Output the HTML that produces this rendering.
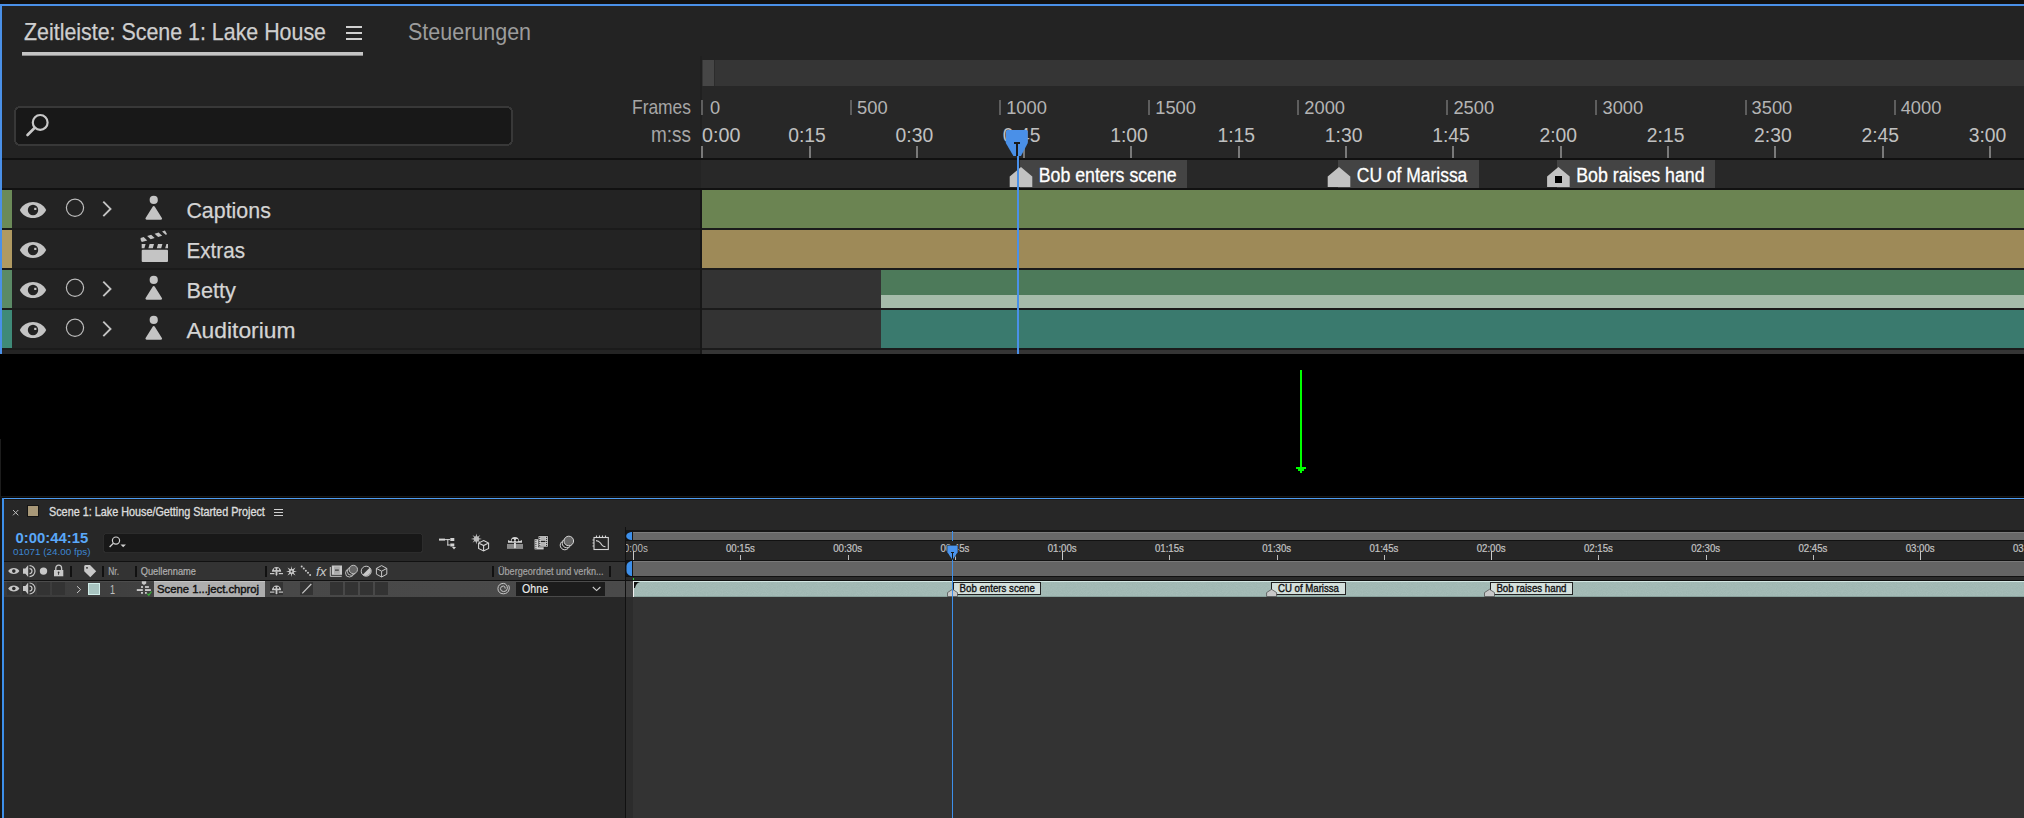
<!DOCTYPE html>
<html><head><meta charset="utf-8"><style>
html,body{margin:0;padding:0;background:#000;width:2024px;height:818px;overflow:hidden}
svg{display:block}
text{font-family:"Liberation Sans",sans-serif}
</style></head><body>
<svg width="2024" height="818" viewBox="0 0 2024 818" shape-rendering="crispEdges">
<rect x="0" y="0" width="2024" height="818" fill="#000" />
<rect x="0" y="0" width="2024" height="4" fill="#121110" />
<rect x="0" y="4" width="2024" height="2" fill="#4a90e8" />
<rect x="0" y="4" width="2" height="350" fill="#4a90e8" />
<rect x="2" y="6" width="2022" height="347" fill="#232323" />
<text x="24.00" y="40" font-size="23.19" font-weight="normal" fill="#cfcfcf" stroke="#cfcfcf" stroke-width="0.25" textLength="301.99" lengthAdjust="spacingAndGlyphs">Zeitleiste: Scene 1: Lake House</text>
<rect x="22" y="52" width="341" height="3" fill="#c4c4c4" />
<rect x="22" y="55" width="341" height="1" fill="#8a8a8a" />
<rect x="346" y="26" width="16" height="2" fill="#d0d0d0" />
<rect x="346" y="32" width="16" height="2" fill="#d0d0d0" />
<rect x="346" y="38" width="16" height="2" fill="#d0d0d0" />
<text x="408.00" y="40" font-size="23.19" font-weight="normal" fill="#9c9c9c" textLength="123.05" lengthAdjust="spacingAndGlyphs">Steuerungen</text>
<rect x="702" y="60" width="1322" height="26" fill="#353535" />
<rect x="703" y="60" width="11" height="26" fill="#464646" />
<rect x="714" y="60" width="1" height="26" fill="#2c2c2c" />
<rect x="15" y="107" width="497" height="38" rx="5" ry="5" fill="#181818" stroke="#383838" stroke-width="2"/>
<g shape-rendering="geometricPrecision"><circle cx="40.2" cy="122.4" r="7.4" fill="none" stroke="#c8c8c8" stroke-width="2.2"/><line x1="27.5" y1="135" x2="34.5" y2="128" stroke="#c8c8c8" stroke-width="2.6" stroke-linecap="round"/></g>
<rect x="701" y="86" width="1323" height="72" fill="#272727" />
<rect x="700" y="56" width="2" height="102" fill="#202020" />
<text x="632.00" y="114" font-size="20.29" font-weight="normal" fill="#a6a6a6" textLength="58.99" lengthAdjust="spacingAndGlyphs">Frames</text>
<text x="651.00" y="141.6" font-size="21.32" font-weight="normal" fill="#a6a6a6" textLength="40.02" lengthAdjust="spacingAndGlyphs">m:ss</text>
<rect x="701" y="100" width="2" height="15" fill="#5e5e5e" />
<text x="710.00" y="114" font-size="18.31" font-weight="normal" fill="#b4b4b4" textLength="10.18" lengthAdjust="spacingAndGlyphs">0</text>
<rect x="850" y="100" width="2" height="15" fill="#5e5e5e" />
<text x="857.08" y="114" font-size="18.31" font-weight="normal" fill="#b4b4b4" textLength="30.55" lengthAdjust="spacingAndGlyphs">500</text>
<rect x="999" y="100" width="2" height="15" fill="#5e5e5e" />
<text x="1006.16" y="114" font-size="18.31" font-weight="normal" fill="#b4b4b4" textLength="40.73" lengthAdjust="spacingAndGlyphs">1000</text>
<rect x="1148" y="100" width="2" height="15" fill="#5e5e5e" />
<text x="1155.24" y="114" font-size="18.31" font-weight="normal" fill="#b4b4b4" textLength="40.73" lengthAdjust="spacingAndGlyphs">1500</text>
<rect x="1297" y="100" width="2" height="15" fill="#5e5e5e" />
<text x="1304.32" y="114" font-size="18.31" font-weight="normal" fill="#b4b4b4" textLength="40.73" lengthAdjust="spacingAndGlyphs">2000</text>
<rect x="1446" y="100" width="2" height="15" fill="#5e5e5e" />
<text x="1453.40" y="114" font-size="18.31" font-weight="normal" fill="#b4b4b4" textLength="40.73" lengthAdjust="spacingAndGlyphs">2500</text>
<rect x="1595" y="100" width="2" height="15" fill="#5e5e5e" />
<text x="1602.48" y="114" font-size="18.31" font-weight="normal" fill="#b4b4b4" textLength="40.73" lengthAdjust="spacingAndGlyphs">3000</text>
<rect x="1745" y="100" width="2" height="15" fill="#5e5e5e" />
<text x="1751.56" y="114" font-size="18.31" font-weight="normal" fill="#b4b4b4" textLength="40.73" lengthAdjust="spacingAndGlyphs">3500</text>
<rect x="1894" y="100" width="2" height="15" fill="#5e5e5e" />
<text x="1900.64" y="114" font-size="18.31" font-weight="normal" fill="#b4b4b4" textLength="40.73" lengthAdjust="spacingAndGlyphs">4000</text>
<rect x="701" y="146" width="2" height="12" fill="#7a7a7a" />
<text x="702.00" y="142" font-size="19.72" font-weight="normal" fill="#c0c0c0" textLength="38.38" lengthAdjust="spacingAndGlyphs">0:00</text>
<rect x="809" y="146" width="2" height="12" fill="#7a7a7a" />
<text x="788.23" y="142" font-size="19.72" font-weight="normal" fill="#c0c0c0" textLength="37.61" lengthAdjust="spacingAndGlyphs">0:15</text>
<rect x="916" y="146" width="2" height="12" fill="#7a7a7a" />
<text x="895.55" y="142" font-size="19.72" font-weight="normal" fill="#c0c0c0" textLength="37.61" lengthAdjust="spacingAndGlyphs">0:30</text>
<rect x="1023" y="146" width="2" height="12" fill="#7a7a7a" />
<text x="1002.87" y="142" font-size="19.72" font-weight="normal" fill="#c0c0c0" textLength="37.61" lengthAdjust="spacingAndGlyphs">0:45</text>
<rect x="1130" y="146" width="2" height="12" fill="#7a7a7a" />
<text x="1110.19" y="142" font-size="19.72" font-weight="normal" fill="#c0c0c0" textLength="37.61" lengthAdjust="spacingAndGlyphs">1:00</text>
<rect x="1238" y="146" width="2" height="12" fill="#7a7a7a" />
<text x="1217.51" y="142" font-size="19.72" font-weight="normal" fill="#c0c0c0" textLength="37.61" lengthAdjust="spacingAndGlyphs">1:15</text>
<rect x="1345" y="146" width="2" height="12" fill="#7a7a7a" />
<text x="1324.83" y="142" font-size="19.72" font-weight="normal" fill="#c0c0c0" textLength="37.61" lengthAdjust="spacingAndGlyphs">1:30</text>
<rect x="1452" y="146" width="2" height="12" fill="#7a7a7a" />
<text x="1432.15" y="142" font-size="19.72" font-weight="normal" fill="#c0c0c0" textLength="37.61" lengthAdjust="spacingAndGlyphs">1:45</text>
<rect x="1560" y="146" width="2" height="12" fill="#7a7a7a" />
<text x="1539.47" y="142" font-size="19.72" font-weight="normal" fill="#c0c0c0" textLength="37.61" lengthAdjust="spacingAndGlyphs">2:00</text>
<rect x="1667" y="146" width="2" height="12" fill="#7a7a7a" />
<text x="1646.79" y="142" font-size="19.72" font-weight="normal" fill="#c0c0c0" textLength="37.61" lengthAdjust="spacingAndGlyphs">2:15</text>
<rect x="1774" y="146" width="2" height="12" fill="#7a7a7a" />
<text x="1754.11" y="142" font-size="19.72" font-weight="normal" fill="#c0c0c0" textLength="37.61" lengthAdjust="spacingAndGlyphs">2:30</text>
<rect x="1882" y="146" width="2" height="12" fill="#7a7a7a" />
<text x="1861.43" y="142" font-size="19.72" font-weight="normal" fill="#c0c0c0" textLength="37.61" lengthAdjust="spacingAndGlyphs">2:45</text>
<rect x="1989" y="146" width="2" height="12" fill="#7a7a7a" />
<text x="1968.75" y="142" font-size="19.72" font-weight="normal" fill="#c0c0c0" textLength="37.61" lengthAdjust="spacingAndGlyphs">3:00</text>
<rect x="2" y="158" width="2022" height="2" fill="#111111" />
<rect x="2" y="160" width="699" height="28" fill="#242424" />
<rect x="701" y="160" width="1323" height="28" fill="#282828" />
<rect x="1019.5" y="160" width="167.5" height="28" fill="#444444" />
<polygon shape-rendering="geometricPrecision" points="1009.7,187 1009.7,176.5 1021,167 1032.3,176.5 1032.3,187" fill="#c2c2c2"/>
<text x="1038.80" y="181.7" font-size="19.57" font-weight="normal" fill="#ffffff" stroke="#ffffff" stroke-width="0.3" textLength="137.86" lengthAdjust="spacingAndGlyphs">Bob enters scene</text>
<rect x="1337.5" y="160" width="141.5" height="28" fill="#444444" />
<polygon shape-rendering="geometricPrecision" points="1327.7,187 1327.7,176.5 1339,167 1350.3,176.5 1350.3,187" fill="#c2c2c2"/>
<text x="1356.80" y="181.7" font-size="19.57" font-weight="normal" fill="#ffffff" stroke="#ffffff" stroke-width="0.3" textLength="110.51" lengthAdjust="spacingAndGlyphs">CU of Marissa</text>
<rect x="1556.9" y="160" width="158.0999999999999" height="28" fill="#444444" />
<polygon shape-rendering="geometricPrecision" points="1547.1000000000001,187 1547.1000000000001,176.5 1558.4,167 1569.7,176.5 1569.7,187" fill="#c2c2c2"/>
<rect x="1555.0" y="176" width="7" height="7" fill="#000" />
<text x="1576.20" y="181.7" font-size="19.57" font-weight="normal" fill="#ffffff" stroke="#ffffff" stroke-width="0.3" textLength="128.44" lengthAdjust="spacingAndGlyphs">Bob raises hand</text>
<rect x="2" y="188" width="2022" height="2" fill="#111111" />
<rect x="2" y="190" width="698" height="38" fill="#232323" />
<rect x="2" y="190" width="10" height="38" fill="#6b8a58" />
<rect x="702" y="190" width="1322" height="38" fill="#262626" />
<rect x="2" y="228" width="2022" height="2" fill="#1b1b1b" />
<text x="186.40" y="218" font-size="22.61" font-weight="normal" fill="#d4d4d4" stroke="#d4d4d4" stroke-width="0.25" textLength="84.44" lengthAdjust="spacingAndGlyphs">Captions</text>
<rect x="2" y="230" width="698" height="38" fill="#232323" />
<rect x="2" y="230" width="10" height="38" fill="#b09a62" />
<rect x="702" y="230" width="1322" height="38" fill="#262626" />
<rect x="2" y="268" width="2022" height="2" fill="#1b1b1b" />
<text x="186.40" y="258" font-size="22.61" font-weight="normal" fill="#d4d4d4" stroke="#d4d4d4" stroke-width="0.25" textLength="58.58" lengthAdjust="spacingAndGlyphs">Extras</text>
<rect x="2" y="270" width="698" height="38" fill="#232323" />
<rect x="2" y="270" width="10" height="38" fill="#5b8a66" />
<rect x="702" y="270" width="1322" height="38" fill="#262626" />
<rect x="2" y="308" width="2022" height="2" fill="#1b1b1b" />
<text x="186.40" y="298" font-size="22.61" font-weight="normal" fill="#d4d4d4" stroke="#d4d4d4" stroke-width="0.25" textLength="49.57" lengthAdjust="spacingAndGlyphs">Betty</text>
<rect x="2" y="310" width="698" height="38" fill="#232323" />
<rect x="2" y="310" width="10" height="38" fill="#3f8a78" />
<rect x="702" y="310" width="1322" height="38" fill="#262626" />
<rect x="2" y="348" width="2022" height="2" fill="#1b1b1b" />
<text x="186.40" y="338" font-size="22.61" font-weight="normal" fill="#d4d4d4" stroke="#d4d4d4" stroke-width="0.25" textLength="109.10" lengthAdjust="spacingAndGlyphs">Auditorium</text>
<rect x="700" y="190" width="2" height="164" fill="#171717" />
<rect x="702" y="190" width="1322" height="38" fill="#6b8452" />
<rect x="702" y="230" width="1322" height="38" fill="#9e8a58" />
<rect x="702" y="270" width="179" height="38" fill="#333333" />
<rect x="881" y="270" width="1143" height="25" fill="#4d7a5a" />
<rect x="881" y="295" width="1143" height="13" fill="#a5bcaa" />
<rect x="702" y="310" width="179" height="38" fill="#333333" />
<rect x="881" y="310" width="1143" height="38" fill="#3a7a6e" />
<rect x="2" y="350" width="698" height="4" fill="#242424" />
<rect x="702" y="350" width="1322" height="4" fill="#353535" />
<g shape-rendering="geometricPrecision" transform="translate(33,210) scale(1.0)"><path d="M-13.2,0 C-8,-10.8 8,-10.8 13.2,0 C8,10.8 -8,10.8 -13.2,0 Z" fill="#c4c4c4"/><circle cx="0" cy="0" r="5.2" fill="#232323"/><rect x="1.2" y="-2.2" width="2.2" height="2.2" fill="#c4c4c4"/></g>
<circle shape-rendering="geometricPrecision" cx="75" cy="207.8" r="8.6" fill="none" stroke="#bdbdbd" stroke-width="1.2"/>
<polyline shape-rendering="geometricPrecision" points="103.3,201.6 110.5,208.9 103.3,216.2" fill="none" stroke="#c4c4c4" stroke-width="1.9"/>
<g shape-rendering="geometricPrecision" fill="#c4c4c4"><circle cx="153.75" cy="199.9" r="4.1"/><path d="M153.75,207.2 L160.95,218.6 L146.55,218.6 Z" stroke="#c4c4c4" stroke-width="2.2" stroke-linejoin="round"/></g>
<g shape-rendering="geometricPrecision" transform="translate(33,250) scale(1.0)"><path d="M-13.2,0 C-8,-10.8 8,-10.8 13.2,0 C8,10.8 -8,10.8 -13.2,0 Z" fill="#c4c4c4"/><circle cx="0" cy="0" r="5.2" fill="#232323"/><rect x="1.2" y="-2.2" width="2.2" height="2.2" fill="#c4c4c4"/></g>
<g shape-rendering="geometricPrecision" transform="translate(33,290) scale(1.0)"><path d="M-13.2,0 C-8,-10.8 8,-10.8 13.2,0 C8,10.8 -8,10.8 -13.2,0 Z" fill="#c4c4c4"/><circle cx="0" cy="0" r="5.2" fill="#232323"/><rect x="1.2" y="-2.2" width="2.2" height="2.2" fill="#c4c4c4"/></g>
<circle shape-rendering="geometricPrecision" cx="75" cy="287.8" r="8.6" fill="none" stroke="#bdbdbd" stroke-width="1.2"/>
<polyline shape-rendering="geometricPrecision" points="103.3,281.6 110.5,288.9 103.3,296.2" fill="none" stroke="#c4c4c4" stroke-width="1.9"/>
<g shape-rendering="geometricPrecision" fill="#c4c4c4"><circle cx="153.75" cy="279.9" r="4.1"/><path d="M153.75,287.2 L160.95,298.6 L146.55,298.6 Z" stroke="#c4c4c4" stroke-width="2.2" stroke-linejoin="round"/></g>
<g shape-rendering="geometricPrecision" transform="translate(33,330) scale(1.0)"><path d="M-13.2,0 C-8,-10.8 8,-10.8 13.2,0 C8,10.8 -8,10.8 -13.2,0 Z" fill="#c4c4c4"/><circle cx="0" cy="0" r="5.2" fill="#232323"/><rect x="1.2" y="-2.2" width="2.2" height="2.2" fill="#c4c4c4"/></g>
<circle shape-rendering="geometricPrecision" cx="75" cy="327.8" r="8.6" fill="none" stroke="#bdbdbd" stroke-width="1.2"/>
<polyline shape-rendering="geometricPrecision" points="103.3,321.6 110.5,328.9 103.3,336.2" fill="none" stroke="#c4c4c4" stroke-width="1.9"/>
<g shape-rendering="geometricPrecision" fill="#c4c4c4"><circle cx="153.75" cy="319.9" r="4.1"/><path d="M153.75,327.2 L160.95,338.6 L146.55,338.6 Z" stroke="#c4c4c4" stroke-width="2.2" stroke-linejoin="round"/></g>
<g shape-rendering="geometricPrecision" fill="#c4c4c4"><rect x="141.7" y="249.8" width="26.3" height="12.2" rx="1"/><path d="M141.7,244 L145.6,244 L144.4,248.2 L141.7,248.2 Z M149.6,244 L154,244 L152.8,248.2 L148.4,248.2 Z M158,244 L162.4,244 L161.2,248.2 L156.8,248.2 Z M166.4,244 L168,244 L168,248.2 L165.2,248.2 Z"/><g transform="translate(141.3,242.2) rotate(-17)"><path d="M0.5,-4.2 L3.8,-4.2 L6.2,0 L0.5,0 Q-0.5,-2 0.5,-4.2 Z M7.4,-4.2 L11.6,-4.2 L14,0 L9.8,0 Z M15.2,-4.2 L19.4,-4.2 L21.8,0 L17.6,0 Z M23,-4.2 L26,-4.2 L27,0 L25.4,0 Z"/></g></g>
<rect x="1017" y="130" width="2" height="224" fill="#4a90e8" />
<path shape-rendering="geometricPrecision" d="M1005.8,131.5 Q1005.8,130 1007.3,130 L1026.3,130 Q1027.8,130 1027.8,131.5 L1027.8,143 L1021,156 L1013.4,156 L1005.8,143 Z" fill="#4a90e8"/>
<rect x="1014" y="142" width="6" height="2" fill="#1a1a1a" />
<rect x="1016" y="144" width="2" height="12" fill="#1a1a1a" />
<rect x="1300" y="370" width="2" height="97" fill="#00ff00" />
<rect x="1296" y="467" width="10" height="2" fill="#00ff00" />
<rect x="1298" y="469" width="6" height="2" fill="#00ff00" />
<rect x="1300" y="471" width="2" height="2" fill="#00ff00" />
<rect x="0" y="496" width="2024" height="1" fill="#171717" />
<rect x="0" y="497" width="2024" height="1" fill="#0a0806" />
<rect x="2" y="498" width="2022" height="1" fill="#4d9cf2" />
<rect x="2" y="499" width="2022" height="1" fill="#1c1814" />
<rect x="2" y="498" width="2" height="320" fill="#3d8fea" />
<rect x="0" y="497" width="2" height="321" fill="#151515" />
<rect x="0" y="439" width="1" height="58" fill="#1c1c1c" />
<rect x="4" y="500" width="2020" height="318" fill="#272727" />
<g shape-rendering="geometricPrecision"><line x1="13" y1="510" x2="18.3" y2="515.3" stroke="#bbb" stroke-width="1"/><line x1="18.3" y1="510" x2="13" y2="515.3" stroke="#bbb" stroke-width="1"/></g>
<rect x="27" y="505" width="12" height="12" fill="#151515" />
<rect x="28" y="506" width="10" height="10" fill="#a89878" />
<text x="49.00" y="516" font-size="11.88" font-weight="normal" fill="#dcdcdc" stroke="#dcdcdc" stroke-width="0.35" textLength="215.82" lengthAdjust="spacingAndGlyphs">Scene 1: Lake House/Getting Started Project</text>
<rect x="274" y="509" width="9" height="1" fill="#cfcfcf" />
<rect x="274" y="512" width="9" height="1" fill="#cfcfcf" />
<rect x="274" y="515" width="9" height="1" fill="#cfcfcf" />
<text x="15.60" y="542.8" font-size="14.37" font-weight="bold" fill="#5aa8f8" textLength="72.63" lengthAdjust="spacingAndGlyphs">0:00:44:15</text>
<text x="13.10" y="555.4" font-size="9.15" font-weight="normal" fill="#3d86d0" textLength="77.49" lengthAdjust="spacingAndGlyphs">01071 (24.00 fps)</text>
<rect x="103.5" y="533.5" width="319" height="19" rx="3" fill="#181818" stroke="#2c2c2c" stroke-width="1"/>
<g shape-rendering="geometricPrecision"><circle cx="116" cy="540.6" r="3.6" fill="none" stroke="#d0d0d0" stroke-width="1.2"/><line x1="109.6" y1="547" x2="113.4" y2="543.2" stroke="#d0d0d0" stroke-width="1.3"/><path d="M120.5,544.4 L125.9,544.4 L123.2,547.2 Z" fill="#d0d0d0"/></g>
<g shape-rendering="geometricPrecision" fill="#d4d4d4" stroke="none"><rect x="439" y="538.6" width="6" height="2"/><rect x="445" y="539.1" width="5" height="1"/><rect x="447.3" y="539" width="1" height="6.5"/><rect x="447.3" y="544.5" width="3" height="1"/><rect x="450.3" y="538" width="4" height="3"/><rect x="450.3" y="543.5" width="4" height="3"/><path d="M452,547 L456,547 L454,549.5 Z"/></g>
<g shape-rendering="geometricPrecision"><path d="M476.4,533.4 L477.3,537 L480.3,535 L478.3,538 L481.9,538.9 L478.3,539.8 L480.3,542.8 L477.3,540.8 L476.4,544.4 L475.5,540.8 L472.5,542.8 L474.5,539.8 L470.9,538.9 L474.5,538 L472.5,535 L475.5,537 Z" fill="#bdbdbd"/><circle cx="476.4" cy="538.9" r="2.6" fill="#bdbdbd"/><path d="M483.6,540.6 L488.6,543.1 L488.6,548.4 L483.6,550.9 L478.6,548.4 L478.6,543.1 Z M478.6,543.1 L483.6,545.6 L488.6,543.1 M483.6,545.6 L483.6,550.9" fill="#262626" stroke="#d4d4d4" stroke-width="1.1"/></g>
<g shape-rendering="geometricPrecision"><rect x="507" y="544" width="16" height="4.9" fill="#8a8a8a"/><path d="M510.9,541 A4,4 0 0 1 518.9,541 Z" fill="#d4d4d4"/><path d="M508,540 Q509,541 511,541 L519,541 Q521,541 522,540 L522,542.8 L508,542.8 Z" fill="#d4d4d4"/><circle cx="513" cy="540.2" r="1.2" fill="#111"/><circle cx="516.9" cy="540.2" r="1.2" fill="#111"/><path d="M514,542.8 L515.9,542.8 L515.9,547.6 L514.95,548.4 L514,547.6 Z" fill="#d8d8d8"/></g>
<g shape-rendering="geometricPrecision"><rect x="534" y="538.7" width="10.2" height="11.3" fill="#111"/><rect x="534.5" y="539.2" width="9.2" height="10.3" fill="#cfcfcf"/><circle cx="535.9" cy="540.6" r="0.55" fill="#222"/><circle cx="535.9" cy="542.5" r="0.55" fill="#222"/><circle cx="535.9" cy="544.4" r="0.55" fill="#222"/><circle cx="535.9" cy="546.3" r="0.55" fill="#222"/><circle cx="535.9" cy="548.2" r="0.55" fill="#222"/><rect x="538" y="535.6" width="10.4" height="11.6" fill="#111"/><rect x="538.5" y="536.1" width="9.4" height="10.6" fill="#cfcfcf"/><circle cx="539.8" cy="537.4" r="0.55" fill="#222"/><circle cx="546.6" cy="537.4" r="0.55" fill="#222"/><circle cx="539.8" cy="539.4" r="0.55" fill="#222"/><circle cx="546.6" cy="539.4" r="0.55" fill="#222"/><circle cx="539.8" cy="541.4" r="0.55" fill="#222"/><circle cx="546.6" cy="541.4" r="0.55" fill="#222"/><circle cx="539.8" cy="543.4" r="0.55" fill="#222"/><circle cx="546.6" cy="543.4" r="0.55" fill="#222"/><circle cx="539.8" cy="545.4" r="0.55" fill="#222"/><circle cx="546.6" cy="545.4" r="0.55" fill="#222"/><rect x="541" y="536.6" width="4.4" height="9.6" fill="#b4b4b4"/><rect x="541" y="540.9" width="4.4" height="1.1" fill="#222"/></g>
<g shape-rendering="geometricPrecision" fill="#262626" stroke="#d4d4d4" stroke-width="1"><circle cx="564.8" cy="545.2" r="4.6"/><circle cx="566.8" cy="543.2" r="4.6"/><circle cx="568.8" cy="541.0" r="4.8" fill="#666"/></g>
<g shape-rendering="geometricPrecision" fill="none" stroke="#d4d4d4" stroke-width="1.1"><rect x="594" y="537.5" width="14.3" height="12"/><path d="M596,540.6 Q598.5,540.6 600.5,543 Q602.5,546.8 605.5,546.8" /><path d="M596.5,537.5 L596.5,535.5 M599.5,537.5 L599.5,535.5 M602.5,537.5 L602.5,535.5 M605.5,537.5 L605.5,535.5 M594,540 L592.5,540 M594,543 L592.5,543 M594,546 L592.5,546"/></g>
<rect x="4" y="561" width="621" height="1" fill="#111111" />
<rect x="4" y="562" width="621" height="18" fill="#333333" />
<rect x="4" y="580" width="621" height="1" fill="#111111" />
<g shape-rendering="geometricPrecision" transform="translate(13.8,571.1)"><path d="M-5.6,0 C-3.5,-4 3.5,-4 5.6,0 C3.5,4 -3.5,4 -5.6,0 Z" fill="#c8c8c8"/><circle cx="0" cy="0" r="1.8" fill="#2a2a2a"/></g>
<g shape-rendering="geometricPrecision"><path d="M23,568.5 L25.4,568.5 L28.2,565.1 L28.2,577.1 L25.4,573.7 L23,573.7 Z" fill="#c8c8c8"/><path d="M29.5,568.6 A2.5,2.5 0 0 1 29.5,573.6 M29.5,565.6 A5.5,5.5 0 0 1 29.5,576.6" fill="none" stroke="#c8c8c8" stroke-width="1.2"/></g>
<circle shape-rendering="geometricPrecision" cx="43.5" cy="571.1" r="3.7" fill="#c8c8c8"/>
<g shape-rendering="geometricPrecision"><path d="M55.8,570 L55.8,568 A2.9,2.9 0 0 1 61.6,568 L61.6,570" fill="none" stroke="#c8c8c8" stroke-width="1.3"/><rect x="54" y="570" width="9.3" height="6.3" fill="#c8c8c8"/><circle cx="58.6" cy="572.5" r="0.9" fill="#333"/><rect x="58.2" y="572.5" width="0.8" height="2.4" fill="#333"/></g>
<rect x="70" y="566" width="2" height="11" fill="#111111" />
<g shape-rendering="geometricPrecision"><path d="M84.2,566.5 Q84,565 85.5,565 L90,565 L96.2,571.2 L90.3,577.3 L84.2,571.2 Z" fill="#c8c8c8"/><circle cx="87" cy="567.8" r="0.9" fill="#222"/></g>
<rect x="102" y="566" width="2" height="11" fill="#111111" />
<text x="108.30" y="575" font-size="10.43" font-weight="normal" fill="#aaaaaa" stroke="#aaaaaa" stroke-width="0.2" textLength="10.68" lengthAdjust="spacingAndGlyphs">Nr.</text>
<rect x="135" y="566" width="2" height="11" fill="#111111" />
<text x="140.70" y="575" font-size="10.43" font-weight="normal" fill="#b0b0b0" stroke="#b0b0b0" stroke-width="0.2" textLength="55.29" lengthAdjust="spacingAndGlyphs">Quellenname</text>
<rect x="265" y="566" width="2" height="11" fill="#111111" />
<g shape-rendering="geometricPrecision" transform="translate(270,565.5)"><path d="M1.9,6.2 A4.65,4.65 0 0 1 11.2,6.2 Z" fill="#c8c8c8"/><circle cx="4.8" cy="3.8" r="1" fill="#2c2c2c"/><circle cx="8.1" cy="3.8" r="1" fill="#2c2c2c"/><path d="M5.6,6 L7.4,6 L7.4,9.2 L6.5,10.4 L5.6,9.2 Z" fill="#c8c8c8"/><rect x="0" y="7.5" width="4.4" height="1.2" fill="#c8c8c8"/><rect x="8.8" y="7.5" width="4.2" height="1.2" fill="#c8c8c8"/></g>
<g shape-rendering="geometricPrecision"><path d="M291.5,566 L292.2,569.5 L295.5,567.5 L293.5,570.8 L297,571.5 L293.5,572.2 L295.5,575.5 L292.2,573.5 L291.5,577 L290.8,573.5 L287.5,575.5 L289.5,572.2 L286,571.5 L289.5,570.8 L287.5,567.5 L290.8,569.5 Z" fill="#c8c8c8"/><circle cx="291.5" cy="571.5" r="2.4" fill="#c8c8c8"/><circle cx="291.5" cy="571.5" r="0.9" fill="#333"/></g>
<g shape-rendering="geometricPrecision" fill="#c8c8c8"><circle cx="301.7" cy="566.5" r="1"/><circle cx="303.8" cy="568.6" r="1"/><circle cx="305.9" cy="570.7" r="1"/><circle cx="308" cy="572.8" r="1"/><circle cx="310.1" cy="574.9" r="1"/></g>
<text x="316" y="575.6" font-size="12" font-style="italic" fill="#c8c8c8" font-family="Liberation Serif" textLength="10.5" lengthAdjust="spacingAndGlyphs">fx</text>
<g shape-rendering="geometricPrecision"><path d="M330.3,567 L330.3,576.3 L341.7,576.3" fill="none" stroke="#c8c8c8" stroke-width="1"/><rect x="331.8" y="565.5" width="10.2" height="9.3" fill="#c8c8c8"/><rect x="334" y="566.5" width="5.8" height="7.3" fill="#aaa"/><rect x="335" y="569.6" width="3.8" height="1" fill="#222"/></g>
<g shape-rendering="geometricPrecision" fill="#333" stroke="#c8c8c8" stroke-width="0.9"><circle cx="349.5" cy="573" r="4"/><circle cx="351.3" cy="571.3" r="4"/><circle cx="353.3" cy="569.5" r="4.2" fill="#666"/></g>
<g shape-rendering="geometricPrecision"><circle cx="366.2" cy="571.2" r="5" fill="#333" stroke="#c8c8c8" stroke-width="1"/><path d="M369.7,567.7 A5,5 0 0 1 362.7,574.7 Z" fill="#c8c8c8"/></g>
<g shape-rendering="geometricPrecision" fill="none" stroke="#c8c8c8" stroke-width="1"><path d="M381.6,565.6 L386.8,568.4 L386.8,574.2 L381.6,577 L376.4,574.2 L376.4,568.4 Z M376.4,568.4 L381.6,571.2 L386.8,568.4 M381.6,571.2 L381.6,577"/></g>
<rect x="492" y="566" width="2" height="11" fill="#111111" />
<text x="498.00" y="575" font-size="10.43" font-weight="normal" fill="#a4a4a4" stroke="#a4a4a4" stroke-width="0.2" textLength="105.59" lengthAdjust="spacingAndGlyphs">Übergeordnet und verkn...</text>
<rect x="609" y="566" width="2" height="11" fill="#111111" />
<defs><linearGradient id="lg" x1="0" x2="1" y1="0" y2="0"><stop offset="0" stop-color="#3a3a3a"/><stop offset="0.45" stop-color="#484848"/><stop offset="1" stop-color="#4a4a4a"/></linearGradient></defs>
<rect x="4" y="581" width="621" height="16" fill="url(#lg)" />
<rect x="4" y="581" width="621" height="1" fill="#4c4c4c" />
<rect x="7.2" y="582.2" width="12.8" height="12.6" fill="#333333" />
<rect x="22" y="582.2" width="12.8" height="12.6" fill="#333333" />
<rect x="37" y="582.2" width="12.8" height="12.6" fill="#333333" />
<rect x="52" y="582.2" width="12.8" height="12.6" fill="#333333" />
<g shape-rendering="geometricPrecision" transform="translate(13.8,588.5)"><path d="M-5.6,0 C-3.5,-4 3.5,-4 5.6,0 C3.5,4 -3.5,4 -5.6,0 Z" fill="#c8c8c8"/><circle cx="0" cy="0" r="1.8" fill="#2a2a2a"/></g>
<g shape-rendering="geometricPrecision"><path d="M23,585.9 L25.4,585.9 L28.2,582.5 L28.2,594.5 L25.4,591.1 L23,591.1 Z" fill="#c8c8c8"/><path d="M29.5,586.0 A2.5,2.5 0 0 1 29.5,591.0 M29.5,583.0 A5.5,5.5 0 0 1 29.5,594.0" fill="none" stroke="#c8c8c8" stroke-width="1.2"/></g>
<polyline shape-rendering="geometricPrecision" points="77,586.2 80.6,589.6 77,593" fill="none" stroke="#c8c8c8" stroke-width="1"/>
<rect x="88" y="583" width="12.2" height="12.3" fill="#d0ece8" />
<rect x="89" y="584" width="10.2" height="10.3" fill="#a8c4c0" />
<text x="110.00" y="593.5" font-size="12.03" font-weight="normal" fill="#c0c0c0" textLength="5.01" lengthAdjust="spacingAndGlyphs">1</text>
<g shape-rendering="geometricPrecision" fill="#c8c8c8"><path d="M141.8,581.2 L146.2,581.2 L146.2,583.6 L144,585.1 L141.8,583.6 Z"/><rect x="141" y="586.1" width="2" height="1.8"/><rect x="145" y="586.1" width="3.9" height="1.8"/><rect x="136.8" y="589.1" width="6" height="1.9"/><rect x="145" y="589.1" width="5.9" height="1.9"/><rect x="141" y="592" width="2" height="1.8"/><rect x="145" y="592" width="1.8" height="1.8"/></g>
<polyline shape-rendering="geometricPrecision" points="147.3,593.6 148.8,595.2 151.5,591.5" fill="none" stroke="#3ab03a" stroke-width="1.2"/>
<rect x="154" y="581" width="111" height="16" fill="#aeaeae" />
<rect x="154" y="581" width="111" height="1" fill="#c4c4c4" />
<text x="157.10" y="592.5" font-size="11.16" font-weight="normal" fill="#111111" stroke="#111111" stroke-width="0.4" textLength="102.01" lengthAdjust="spacingAndGlyphs">Scene 1...ject.chproj</text>
<rect x="270" y="582.3" width="12.8" height="12.6" fill="#333333" />
<rect x="300.2" y="582.3" width="12.6" height="12.6" fill="#333333" />
<rect x="330.2" y="582.3" width="12.8" height="12.6" fill="#333333" />
<rect x="345.2" y="582.3" width="12.8" height="12.6" fill="#333333" />
<rect x="360.2" y="582.3" width="12.8" height="12.6" fill="#333333" />
<rect x="375.2" y="582.3" width="12.8" height="12.6" fill="#333333" />
<g shape-rendering="geometricPrecision" transform="translate(270,584)"><path d="M1.9,6.2 A4.65,4.65 0 0 1 11.2,6.2 Z" fill="#c8c8c8"/><circle cx="4.8" cy="3.8" r="1" fill="#2c2c2c"/><circle cx="8.1" cy="3.8" r="1" fill="#2c2c2c"/><path d="M5.6,6 L7.4,6 L7.4,9.2 L6.5,10.4 L5.6,9.2 Z" fill="#c8c8c8"/><rect x="0" y="7.5" width="4.4" height="1.2" fill="#c8c8c8"/><rect x="8.8" y="7.5" width="4.2" height="1.2" fill="#c8c8c8"/></g>
<line shape-rendering="geometricPrecision" x1="302.3" y1="593.3" x2="311.3" y2="584" stroke="#c8c8c8" stroke-width="1.2"/>
<path shape-rendering="geometricPrecision" d="M508.6,585.2 Q509.6,587 509.2,589 Q508.4,593.6 503.4,593.8 Q498.2,593.6 497.9,588.6 Q498.2,583.6 503.4,583.4 Q507.4,583.8 507.4,588.4 Q507,591.6 503.6,591.6 Q500.6,591.4 500.4,588.6 Q500.8,586 503.4,586 Q505.4,586.4 505.2,588.6" fill="none" stroke="#c8c8c8" stroke-width="1"/>
<rect x="515.6" y="582.3" width="89.4" height="13.5" fill="#1c1c1c" />
<text x="522.00" y="592.8" font-size="12.03" font-weight="normal" fill="#ececec" stroke="#ececec" stroke-width="0.15" textLength="26.11" lengthAdjust="spacingAndGlyphs">Ohne</text>
<polyline shape-rendering="geometricPrecision" points="592.8,587 596.6,590.6 600.4,587" fill="none" stroke="#d0d0d0" stroke-width="1.1"/>
<rect x="625" y="527" width="1" height="291" fill="#111111" />
<rect x="626" y="530" width="1398" height="2" fill="#161616" />
<rect x="626" y="532" width="1398" height="8" fill="#686868" />
<rect x="626" y="532" width="1398" height="1" fill="#7c7c7c" />
<rect x="626" y="540" width="1398" height="1" fill="#111" />
<rect x="626" y="541" width="1398" height="19" fill="#262626" />
<rect x="626" y="560" width="1398" height="1" fill="#111" />
<rect x="626" y="561" width="1398" height="15" fill="#646464" />
<rect x="626" y="561" width="1398" height="1" fill="#7a7a7a" />
<rect x="626" y="576" width="1398" height="1" fill="#111" />
<rect x="626" y="577" width="1398" height="3" fill="#2a2a2a" />
<rect x="626" y="580" width="1398" height="1" fill="#111" />
<rect x="626" y="581" width="7" height="16" fill="#474747" />
<rect x="626" y="597" width="1398" height="221" fill="#333333" />
<rect x="626" y="597" width="7" height="221" fill="#2c2c2c" />
<rect x="626" y="532" width="7" height="8" fill="#151515" />
<rect x="626" y="561" width="7" height="15" fill="#151515" />
<path shape-rendering="geometricPrecision" d="M632,532 L631,532 Q626.2,533 626.2,536 Q626.2,539 631,540 L632,540 Z" fill="#3d8fea"/>
<path shape-rendering="geometricPrecision" d="M632,561 L631,561 Q626.5,562.5 626.5,566 L626.5,571 Q626.5,574.5 631,576 L632,576 Z" fill="#3d8fea"/>
<rect x="633" y="578" width="1" height="2" fill="#36d236" />
<rect x="633" y="551" width="1" height="9" fill="#c8c8c8" />
<rect x="740" y="555" width="1" height="5" fill="#bdbdbd" />
<text x="725.90" y="551.8" font-size="10.14" font-weight="normal" fill="#c4c4c4" stroke="#c4c4c4" stroke-width="0.2" textLength="29.08" lengthAdjust="spacingAndGlyphs">00:15s</text>
<rect x="848" y="555" width="1" height="5" fill="#bdbdbd" />
<text x="833.15" y="551.8" font-size="10.14" font-weight="normal" fill="#c4c4c4" stroke="#c4c4c4" stroke-width="0.2" textLength="29.08" lengthAdjust="spacingAndGlyphs">00:30s</text>
<rect x="955" y="555" width="1" height="5" fill="#bdbdbd" />
<text x="940.40" y="551.8" font-size="10.14" font-weight="normal" fill="#c4c4c4" stroke="#c4c4c4" stroke-width="0.2" textLength="29.08" lengthAdjust="spacingAndGlyphs">00:45s</text>
<rect x="1062" y="551" width="1" height="9" fill="#c8c8c8" />
<text x="1047.65" y="551.8" font-size="10.14" font-weight="normal" fill="#c4c4c4" stroke="#c4c4c4" stroke-width="0.2" textLength="29.08" lengthAdjust="spacingAndGlyphs">01:00s</text>
<rect x="1169" y="555" width="1" height="5" fill="#bdbdbd" />
<text x="1154.90" y="551.8" font-size="10.14" font-weight="normal" fill="#c4c4c4" stroke="#c4c4c4" stroke-width="0.2" textLength="29.08" lengthAdjust="spacingAndGlyphs">01:15s</text>
<rect x="1277" y="555" width="1" height="5" fill="#bdbdbd" />
<text x="1262.15" y="551.8" font-size="10.14" font-weight="normal" fill="#c4c4c4" stroke="#c4c4c4" stroke-width="0.2" textLength="29.08" lengthAdjust="spacingAndGlyphs">01:30s</text>
<rect x="1384" y="555" width="1" height="5" fill="#bdbdbd" />
<text x="1369.40" y="551.8" font-size="10.14" font-weight="normal" fill="#c4c4c4" stroke="#c4c4c4" stroke-width="0.2" textLength="29.08" lengthAdjust="spacingAndGlyphs">01:45s</text>
<rect x="1491" y="551" width="1" height="9" fill="#c8c8c8" />
<text x="1476.65" y="551.8" font-size="10.14" font-weight="normal" fill="#c4c4c4" stroke="#c4c4c4" stroke-width="0.2" textLength="29.08" lengthAdjust="spacingAndGlyphs">02:00s</text>
<rect x="1598" y="555" width="1" height="5" fill="#bdbdbd" />
<text x="1583.90" y="551.8" font-size="10.14" font-weight="normal" fill="#c4c4c4" stroke="#c4c4c4" stroke-width="0.2" textLength="29.08" lengthAdjust="spacingAndGlyphs">02:15s</text>
<rect x="1706" y="555" width="1" height="5" fill="#bdbdbd" />
<text x="1691.15" y="551.8" font-size="10.14" font-weight="normal" fill="#c4c4c4" stroke="#c4c4c4" stroke-width="0.2" textLength="29.08" lengthAdjust="spacingAndGlyphs">02:30s</text>
<rect x="1813" y="555" width="1" height="5" fill="#bdbdbd" />
<text x="1798.40" y="551.8" font-size="10.14" font-weight="normal" fill="#c4c4c4" stroke="#c4c4c4" stroke-width="0.2" textLength="29.08" lengthAdjust="spacingAndGlyphs">02:45s</text>
<rect x="1920" y="551" width="1" height="9" fill="#c8c8c8" />
<text x="1905.65" y="551.8" font-size="10.14" font-weight="normal" fill="#c4c4c4" stroke="#c4c4c4" stroke-width="0.2" textLength="29.08" lengthAdjust="spacingAndGlyphs">03:00s</text>
<rect x="2027" y="555" width="1" height="5" fill="#bdbdbd" />
<text x="2012.90" y="551.8" font-size="10.14" font-weight="normal" fill="#c4c4c4" stroke="#c4c4c4" stroke-width="0.2" textLength="29.08" lengthAdjust="spacingAndGlyphs">03:15s</text>
<svg x="626" y="530" width="100" height="30"><text x="-2.2" y="21.8" font-size="10.1" fill="#bbbbbb" textLength="24" lengthAdjust="spacingAndGlyphs">0:00s</text></svg>
<defs><filter id="nz2" x="0" y="0" width="100%" height="100%"><feTurbulence type="fractalNoise" baseFrequency="1.2" numOctaves="1" seed="7"/><feColorMatrix type="matrix" values="0 0 0 0 1  0 0 0 0 1  0 0 0 0 1  1.5 0 0 0 -0.5"/></filter></defs>
<defs><filter id="nz" x="0" y="0" width="100%" height="100%"><feTurbulence type="fractalNoise" baseFrequency="0.9" numOctaves="2" seed="3"/><feColorMatrix type="matrix" values="0 0 0 0 0.64  0 0 0 0 0.74  0 0 0 0 0.72  0 0 0 -0.6 0.6"/><feComposite in2="SourceGraphic" operator="in"/></filter></defs>
<rect x="633" y="581" width="1391" height="16" fill="#a0b8b3" />
<rect x="633" y="581" width="1391" height="16" fill="#000" opacity="0.10" filter="url(#nz2)"/>
<rect x="633" y="581" width="1391" height="1" fill="#d4e8e4" />
<rect x="633" y="596" width="1391" height="1" fill="#8aa29d" />
<rect x="633" y="581" width="1" height="16" fill="#f0f0f0" />
<path shape-rendering="geometricPrecision" d="M634,582 L640,582 Q636,583 635,588 L634,588 Z" fill="#111"/>
<rect x="953.5" y="582.5" width="87.20000000000005" height="12" fill="#d4e0dc" stroke="#222" stroke-width="1" shape-rendering="crispEdges"/>
<polygon shape-rendering="geometricPrecision" points="947.5,596.5 947.5,592.6 952.5,589.3 957.5,592.6 957.5,596.5" fill="#c8c8c8" stroke="#444" stroke-width="0.7"/>
<text x="959.60" y="592" font-size="10.43" font-weight="normal" fill="#111111" stroke="#111111" stroke-width="0.35" textLength="75.28" lengthAdjust="spacingAndGlyphs">Bob enters scene</text>
<rect x="1271.5" y="582.5" width="73.5" height="12" fill="#d4e0dc" stroke="#222" stroke-width="1" shape-rendering="crispEdges"/>
<polygon shape-rendering="geometricPrecision" points="1266.6,596.5 1266.6,592.6 1271.6,589.3 1276.6,592.6 1276.6,596.5" fill="#c8c8c8" stroke="#444" stroke-width="0.7"/>
<text x="1278.00" y="592" font-size="10.43" font-weight="normal" fill="#111111" stroke="#111111" stroke-width="0.35" textLength="60.95" lengthAdjust="spacingAndGlyphs">CU of Marissa</text>
<rect x="1490.0" y="582.5" width="82.90000000000009" height="12" fill="#d4e0dc" stroke="#222" stroke-width="1" shape-rendering="crispEdges"/>
<polygon shape-rendering="geometricPrecision" points="1484.5,596.5 1484.5,592.6 1489.5,589.3 1494.5,592.6 1494.5,596.5" fill="#c8c8c8" stroke="#444" stroke-width="0.7"/>
<text x="1496.40" y="592" font-size="10.43" font-weight="normal" fill="#111111" stroke="#111111" stroke-width="0.35" textLength="70.02" lengthAdjust="spacingAndGlyphs">Bob raises hand</text>
<rect x="952" y="531" width="1" height="10" fill="#3d8fea" />
<rect x="952" y="559" width="1" height="259" fill="#3d8fea" />
<path shape-rendering="geometricPrecision" d="M947,546.5 Q947,545.2 948.3,545.2 L956.7,545.2 Q958,545.2 958,546.5 L958,552.2 L953.4,559.3 L951.6,559.3 L947,552.2 Z" fill="#4a94ee" stroke="#1a1206" stroke-width="0.6"/>
<rect x="951" y="552" width="3" height="1" fill="#1a1a1a" />
<rect x="952" y="553" width="1" height="6" fill="#1a1a1a" />
</svg>
</body></html>
